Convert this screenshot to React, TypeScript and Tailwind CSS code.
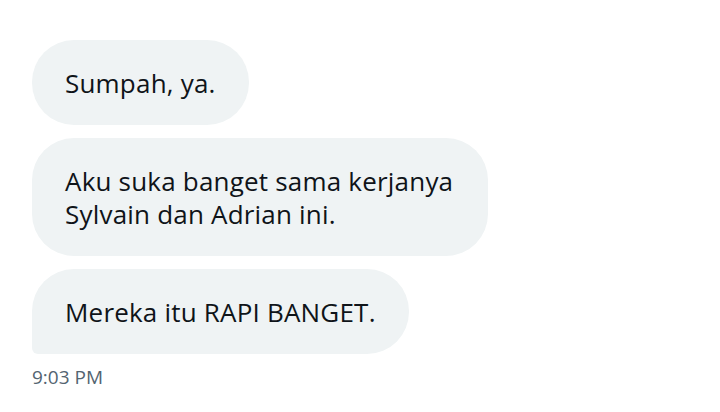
const messages = [
  "Sumpah, ya.",
  "Aku suka banget sama kerjanya Sylvain dan Adrian ini.",
  "Mereka itu RAPI BANGET.",
];

const Bubble = ({ text, last }: { text: string; last: boolean }) => (
  <div
    className={`max-w-[456px] rounded-[42px] bg-[#eff3f4] px-[33px] pt-[27px] pb-[25px] text-[26px] leading-[33px] tracking-[0.2px] text-[#0f1419] ${
      last ? "rounded-bl-[6px]" : ""
    }`}
  >
    {text}
  </div>
);

export default function App() {
  return (
    <div
      className="flex h-[412px] w-[720px] flex-col items-start gap-[13px] bg-white px-[32px] pt-[40px]"
      style={{ fontFamily: "'Open Sans', sans-serif" }}
    >
      {messages.map((m, i) => (
        <Bubble key={i} text={m} last={i === messages.length - 1} />
      ))}
      <div className="-mt-[1px] text-[19px] leading-[22px] text-[#536471]">
        9:03 PM
      </div>
    </div>
  );
}
